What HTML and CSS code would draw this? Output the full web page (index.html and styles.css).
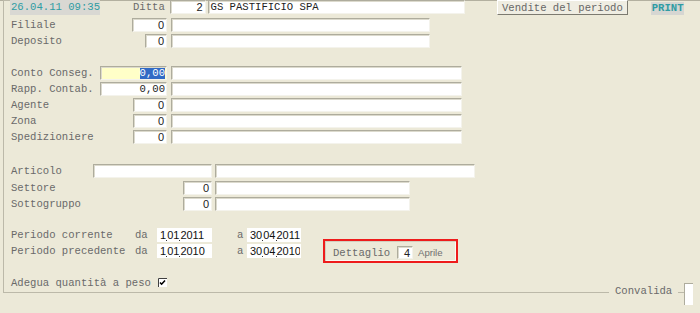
FILE: index.html
```html
<!DOCTYPE html>
<html lang="it">
<head>
    <meta charset="UTF-8">
    <title>Vendite del periodo</title>
    <link rel="stylesheet" href="styles.css">
</head>
<body>
    <main class="frame">
        <header class="top-bar">
            <div class="clock">26.04.11 09:35</div>
            <span class="top-label">Ditta</span>
            <div class="field field-num field-ditta">2</div>
            <div class="field field-text field-company">GS PASTIFICIO SPA</div>
            <button class="button-title">Vendite del periodo</button>
            <div class="print-tag">PRINT</div>
        </header>

        <section class="group group-sedi">
            <div class="row">
                <div class="lead"><span class="label">Filiale</span><div class="field field-num w-35">0</div></div>
                <div class="field w-259"></div>
            </div>
            <div class="row">
                <div class="lead"><span class="label">Deposito</span><div class="field field-num w-22">0</div></div>
                <div class="field w-259"></div>
            </div>
        </section>

        <section class="group group-conti">
            <div class="row">
                <div class="lead"><span class="label">Conto Conseg.</span><div class="field field-mono field-active w-67"><span class="selected">0,00</span></div></div>
                <div class="field w-291"></div>
            </div>
            <div class="row">
                <div class="lead"><span class="label">Rapp. Contab.</span><div class="field field-mono w-67">0,00</div></div>
                <div class="field w-291"></div>
            </div>
            <div class="row">
                <div class="lead"><span class="label">Agente</span><div class="field field-num w-34">0</div></div>
                <div class="field w-291"></div>
            </div>
            <div class="row">
                <div class="lead"><span class="label">Zona</span><div class="field field-num w-34">0</div></div>
                <div class="field w-291"></div>
            </div>
            <div class="row">
                <div class="lead"><span class="label">Spedizioniere</span><div class="field field-num w-34">0</div></div>
                <div class="field w-291"></div>
            </div>
        </section>

        <section class="group group-articoli">
            <div class="row">
                <div class="lead lead-wide"><span class="label">Articolo</span><div class="field w-119"></div></div>
                <div class="field w-260"></div>
            </div>
            <div class="row">
                <div class="lead lead-wide"><span class="label">Settore</span><div class="field field-num w-29">0</div></div>
                <div class="field w-195"></div>
            </div>
            <div class="row">
                <div class="lead lead-wide"><span class="label">Sottogruppo</span><div class="field field-num w-29">0</div></div>
                <div class="field w-195"></div>
            </div>
        </section>

        <section class="group group-periodi">
            <div class="period-list">
                <div class="row">
                    <span class="label label-period">Periodo corrente</span>
                    <span class="label label-da">da</span>
                    <div class="field field-date w-55">1<i class="sep"></i>01<i class="sep"></i>2011</div>
                    <span class="label label-a">a</span>
                    <div class="field field-date w-54">30<i class="sep"></i>04<i class="sep"></i>2011</div>
                </div>
                <div class="row">
                    <span class="label label-period">Periodo precedente</span>
                    <span class="label label-da">da</span>
                    <div class="field field-date w-55">1<i class="sep"></i>01<i class="sep"></i>2010</div>
                    <span class="label label-a">a</span>
                    <div class="field field-date w-54">30<i class="sep"></i>04<i class="sep"></i>2010</div>
                </div>
            </div>
            <div class="detail-box">
                <span class="label label-detail">Dettaglio</span>
                <div class="field field-num field-month">4</div>
                <span class="month-name">Aprile</span>
            </div>
        </section>

        <div class="row row-check">
            <span class="label">Adegua quantità a peso</span>
            <svg class="checkbox" width="9" height="9" viewBox="0 0 9 9">
                <rect x="0" y="0" width="9" height="9" fill="#ffffff"/>
                <path d="M0.5 9V0.5H9" fill="none" stroke="#404040" stroke-width="1"/>
                <path d="M2 4.5L3.6 6.2L7 2.5" fill="none" stroke="#000000" stroke-width="1.6"/>
            </svg>
        </div>

        <div class="confirm">
            <span class="confirm-label">Convalida</span>
        </div>
        <div class="confirm-box"></div>
    </main>
</body>
</html>
```

FILE: styles.css
```css
:root {
    --color-bg: #ECE9D8;
    --color-label: #6a6a6a;
    --color-line: #bcb9a9;
    --color-teal: #2f9ca3;
    --color-field: #FFFFFF;
    --color-field-edge: #aeac9d;
    --color-field-inner: #dcdacd;
    --color-select: #316AC5;
}

* {
    margin: 0;
    padding: 0;
    box-sizing: border-box;
}

body {
    background-color: var(--color-bg);
    font-family: "Liberation Mono", monospace;
    font-size: 10.6px;
    color: var(--color-label);
    height: 313px;
    overflow: hidden;
    box-shadow: inset 0 1px #b3b0a0;
}

.frame {
    position: relative;
    margin: 10px 0 0 3px;
    width: 681px;
    height: 293px;
    border-left: 1px solid var(--color-line);
    border-bottom: 1px solid var(--color-line);
}

.frame::before {
    content: "";
    position: absolute;
    left: 0;
    top: 0;
    width: 6px;
    border-top: 1px solid var(--color-line);
}

/* barra superiore */
.top-bar {
    display: flex;
    align-items: flex-start;
    height: 16px;
    margin-top: -10px;
    position: relative;
}

.clock {
    margin-left: 6px;
    width: 90px;
    height: 15px;
    line-height: 15px;
    padding-left: 1px;
    white-space: nowrap;
    background-color: #d9d8d3;
    color: var(--color-teal);
}

.top-label {
    margin-left: 33px;
    width: 38px;
    line-height: 15px;
}

.field-ditta {
    width: 36px;
    height: 15px;
}

.field-company {
    margin-left: 2px;
    width: 257px;
    height: 15px;
}

.button-title {
    margin-left: 32px;
    width: 137px;
    height: 15px;
    font-family: "Liberation Mono", monospace;
    font-size: 10.6px;
    color: #666666;
    background-color: #EFEDE2;
    border: 1px solid;
    border-color: #FFFFFF #7c7a70 #7c7a70 #FFFFFF;
    line-height: 12px;
    white-space: nowrap;
}

.print-tag {
    margin-left: 23px;
    margin-top: 2px;
    width: 34px;
    height: 13px;
    line-height: 13px;
    text-align: center;
    background-color: #d6d6d2;
    color: var(--color-teal);
    font-weight: bold;
}

/* campi */
.field {
    flex: none;
    height: 14px;
    line-height: 12px;
    background-color: var(--color-field);
    border: 1px solid;
    border-color: var(--color-field-edge) #f4f3ec #f4f3ec var(--color-field-edge);
    box-shadow: inset 1px 1px var(--color-field-inner);
    color: #222222;
    white-space: nowrap;
    overflow: hidden;
}

.field-num {
    font-family: "Liberation Sans", sans-serif;
    font-size: 11px;
    text-align: right;
    padding-right: 2px;
}

.field-mono {
    text-align: right;
    padding-right: 1px;
    color: #222222;
}

.field-text {
    padding-left: 2px;
    color: #222222;
}

.field-active {
    background-color: #FFFFC8;
}

.selected {
    background-color: var(--color-select);
    color: #FFFFFF;
    display: inline-block;
    line-height: 11px;
}

.field-date {
    font-family: "Liberation Sans", sans-serif;
    font-size: 11px;
    padding-left: 2px;
    color: #111111;
    border-color: #FFFFFF;
    box-shadow: none;
}

.sep {
    display: inline-block;
    width: 1px;
    height: 1px;
    margin: 0 0 -2px 0;
    background-color: #333333;
    vertical-align: baseline;
}

.w-22 { width: 22px; }
.w-29 { width: 29px; }
.w-34 { width: 34px; }
.w-35 { width: 35px; }
.w-54 { width: 54px; }
.w-55 { width: 55px; }
.w-67 { width: 67px; }
.w-119 { width: 119px; }
.w-195 { width: 195px; }
.w-259 { width: 259px; }
.w-260 { width: 260px; }
.w-291 { width: 291px; }

/* righe */
.group {
    display: flex;
    flex-direction: column;
    gap: 2px;
}

.group-sedi { margin-top: 2px; }
.group-conti { margin-top: 18px; }
.group-articoli { margin-top: 20px; }

.row {
    display: flex;
    align-items: center;
    height: 14px;
}

.lead {
    display: flex;
    align-items: center;
    width: 163px;
    margin-right: 4px;
}

.lead .field {
    margin-left: auto;
}

.lead-wide {
    width: 208px;
    margin-right: 3px;
}

.label {
    padding-left: 7px;
    white-space: nowrap;
    line-height: 14px;
}

.group-articoli .row:first-child {
    margin-bottom: 1px;
}

/* periodi */
.group-periodi {
    flex-direction: row;
    align-items: flex-start;
    margin-top: 17px;
    height: 32px;
}

.period-list {
    display: flex;
    flex-direction: column;
    gap: 2px;
}

.label-period {
    width: 131px;
}

.label-da {
    padding-left: 0;
    width: 22px;
}

.label-a {
    padding-left: 0;
    margin-left: 25px;
    width: 10px;
}

.detail-box {
    display: flex;
    align-items: center;
    margin: 11px 0 0 20px;
    width: 135px;
    height: 24px;
    border: 2px solid #ee1c1c;
    box-shadow: inset 1px 1px #d2cfbf, inset -1px -1px #fbfaf4;
    padding: 3px 0 0 8px;
}

.label-detail {
    padding-left: 0;
    width: 64px;
}

.field-month {
    width: 16px;
    height: 13px;
}

.month-name {
    margin-left: 5px;
    font-family: "Liberation Sans", sans-serif;
    font-size: 9.6px;
    color: #707070;
}

/* adegua */
.row-check {
    margin-top: 16px;
}

.checkbox {
    margin-left: 7px;
    margin-top: -1px;
}

/* convalida */
.confirm {
    position: absolute;
    right: 6px;
    top: 284px;
    width: 69px;
    height: 14px;
    padding-left: 6px;
    line-height: 14px;
    background-color: var(--color-bg);
}

.confirm-box {
    position: absolute;
    left: 680px;
    top: 283px;
    width: 9px;
    height: 22px;
    background-color: var(--color-field);
    border-left: 1px solid var(--color-field-edge);
    border-top: 1px solid var(--color-field-edge);
}
```
